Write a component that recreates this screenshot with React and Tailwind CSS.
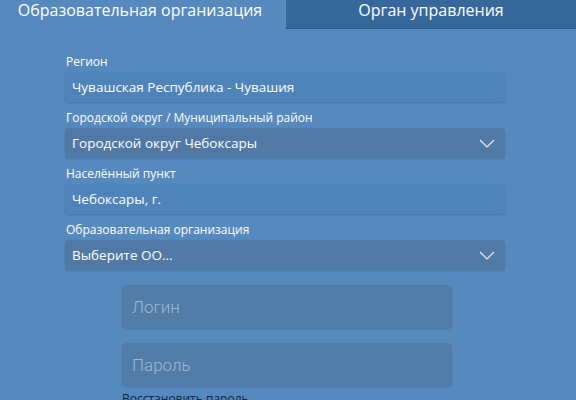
import React, { useState } from "react";

const fields = [
    { label: "Регион", value: "Чувашская Республика - Чувашия", select: false },
    { label: "Городской округ / Муниципальный район", value: "Городской округ Чебоксары", select: true },
    { label: "Населённый пункт", value: "Чебоксары, г.", select: false },
    { label: "Образовательная организация", value: "Выберите ОО...", select: true },
];

function Chevron() {
    return (
        <svg width="16" height="9" viewBox="0 0 16 9" className="shrink-0">
            <path d="M1 1 L8 8 L15 1" fill="none" stroke="#e8f0f8" strokeWidth="1.2" />
        </svg>
    );
}

function Field({ label, value, select }) {
    return (
        <div className="flex flex-col">
            <label className="text-[12px] leading-[15px] text-white mb-[3px] pl-[1px]">{label}</label>
            <div
                className={
                    "h-[30px] rounded-[4px] flex items-center justify-between pl-[7px] pr-[10px] text-[13.5px] text-white shadow-[0_1px_2px_rgba(40,80,130,0.35)] " +
                    (select ? "bg-[#5179a5]" : "bg-[#4f84ba]")
                }
            >
                <span>{value}</span>
                {select && <Chevron />}
            </div>
        </div>
    );
}

export default function App() {
    const [tab, setTab] = useState(0);

    return (
        <div className="w-[576px] h-[400px] overflow-hidden bg-[#5689bd]" style={{ fontFamily: '"Open Sans", "Noto Sans", sans-serif' }}>
            <div className="flex h-[29px]">
                <button
                    onClick={() => setTab(0)}
                    className="w-[286px] h-[29px] overflow-hidden text-white text-center pr-[6px]"
                >
                    <span className="block text-[16px] leading-[20px] -mt-[9px]">Образовательная организация</span>
                </button>
                <button
                    onClick={() => setTab(1)}
                    className="flex-1 h-[29px] overflow-hidden bg-[#36689c] border-b border-[#2e5c8c] text-white text-center"
                >
                    <span className="block text-[16px] leading-[20px] -mt-[9px]">Орган управления</span>
                </button>
            </div>

            <div className="ml-[65px] w-[440px] mt-[25px] flex flex-col gap-[8px]">
                {fields.map((f) => (
                    <Field key={f.label} {...f} />
                ))}
            </div>

            <div className="ml-[122px] w-[330px] mt-[15px] flex flex-col gap-[15px]" style={{ fontFamily: "Roboto, sans-serif" }}>
                <input
                    placeholder="Логин"
                    className="h-[43px] rounded-[5px] bg-[#517ca8] px-[10px] text-[17px] font-light text-white placeholder:text-[#9fb9d4] outline-none shadow-[0_1px_2px_rgba(40,80,130,0.35)]"
                />
                <input
                    type="password"
                    placeholder="Пароль"
                    className="h-[43px] rounded-[5px] bg-[#517ca8] px-[10px] text-[17px] font-light text-white placeholder:text-[#9fb9d4] outline-none shadow-[0_1px_2px_rgba(40,80,130,0.35)]"
                />
            </div>
            <a className="block ml-[122px] mt-[5px] text-[12px] leading-[16px] text-[#10243a]" style={{ fontFamily: '"Open Sans", sans-serif' }}>
                Восстановить пароль
            </a>
        </div>
    );
}
